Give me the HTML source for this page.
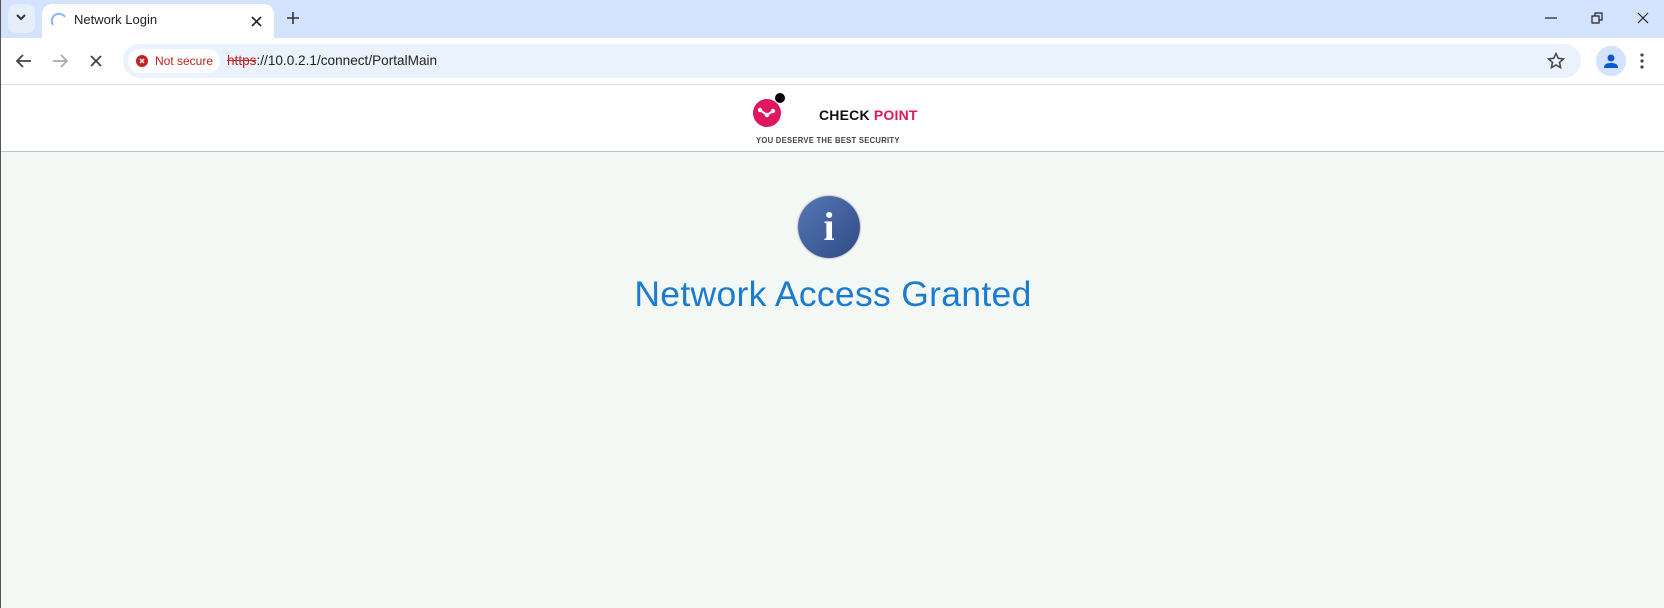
<!DOCTYPE html>
<html><head><meta charset="utf-8"><style>
*{margin:0;padding:0;box-sizing:border-box}
body{width:1664px;height:608px;overflow:hidden;font-family:"Liberation Sans",sans-serif;background:#f4f8f5;position:relative;border-left:1px solid #555}
.tabbar{position:absolute;left:0;top:0;width:1664px;height:38px;background:#d3e3fd}
.tab{position:absolute;left:41px;top:4px;width:232px;height:34px;background:#fff;border-radius:10px 10px 0 0}
.toolbar{position:absolute;left:0;top:38px;width:1664px;height:47px;background:#fff;border-bottom:1px solid #dcdcdc}
.omni{position:absolute;left:122px;top:6px;width:1458px;height:34px;background:#e9f2fd;border-radius:17px}
.chip{position:absolute;left:5px;top:5px;width:92px;height:24px;background:#fff;border-radius:12px;color:#c5221f;font-size:12px;line-height:24px;padding-left:27px;white-space:nowrap}
.header{position:absolute;left:0;top:85px;width:1664px;height:67px;background:#fff;border-bottom:1px solid #c0c0c0}
.title{position:absolute;left:0;width:1664px;top:274px;text-align:center;color:#1a7bd0;font-size:35.5px;font-weight:300;letter-spacing:0.3px}
</style></head><body>
<div class="tabbar">
 <div style="position:absolute;left:7px;top:4px;width:27px;height:29px;background:#e6eefb;border-radius:8px"></div>
 <svg style="position:absolute;left:14px;top:14px" width="12" height="8"><path d="M2 1l4 4 4-4" stroke="#333" stroke-width="2" fill="none"/></svg>
 <div class="tab">
  <svg style="position:absolute;left:8px;top:8px" width="18" height="18"><path d="M3 13A7 7 0 0 1 15 5" stroke="#8ab4f8" stroke-width="2" fill="none"/></svg>
  <div style="position:absolute;left:32px;top:8px;font-size:13px;color:#222">Network Login</div>
  <svg style="position:absolute;left:209px;top:12px" width="11" height="11"><path d="M1 1l9 9M10 1l-9 9" stroke="#222" stroke-width="1.6"/></svg>
 </div>
 <svg style="position:absolute;left:285px;top:11px" width="14" height="14"><path d="M7 1v12M1 7h12" stroke="#333" stroke-width="1.6"/></svg>
 <svg style="position:absolute;left:1544px;top:17px" width="12" height="2"><path d="M0 1h12" stroke="#222" stroke-width="1.2"/></svg>
 <svg style="position:absolute;left:1590px;top:12px" width="12" height="12"><path d="M1 4h7v7H1zM4 4V1h7v7H8" stroke="#222" stroke-width="1.2" fill="none"/></svg>
 <svg style="position:absolute;left:1636px;top:12px" width="12" height="12"><path d="M1 1l10 10M11 1L1 11" stroke="#222" stroke-width="1.2"/></svg>
</div>
<div class="toolbar">
 <svg style="position:absolute;left:15px;top:16px" width="16" height="14"><path d="M15 7H2M7 1L1 7l6 6" stroke="#444" stroke-width="1.8" fill="none"/></svg>
 <svg style="position:absolute;left:51px;top:16px" width="16" height="14"><path d="M1 7h13M9 1l6 6-6 6" stroke="#aaa" stroke-width="1.8" fill="none"/></svg>
 <svg style="position:absolute;left:89px;top:17px" width="12" height="12"><path d="M1 1l10 10M11 1L1 11" stroke="#444" stroke-width="1.8"/></svg>
 <div class="omni">
  <div class="chip"><svg style="position:absolute;left:8px;top:6px" width="12" height="12"><circle cx="6" cy="6" r="6" fill="#c5221f"/><path d="M4 4l4 4M8 4l-4 4" stroke="#fff" stroke-width="1.5"/></svg>Not secure</div>
  <div style="position:absolute;left:104px;top:9px;font-size:13.6px;color:#222"><span style="color:#c5221f;text-decoration:line-through">https</span>://10.0.2.1/connect/PortalMain</div>
  <svg style="position:absolute;left:1424px;top:8px" width="18" height="18"><path d="M9 1.5l2.2 4.8 5.2.6-3.9 3.5 1.1 5.2L9 13l-4.6 2.6 1.1-5.2L1.6 6.9l5.2-.6z" stroke="#444" stroke-width="1.5" fill="none"/></svg>
 </div>
 <div style="position:absolute;left:1595px;top:8px;width:30px;height:30px;border-radius:50%;background:#d3e3fd"></div>
 <svg style="position:absolute;left:1601px;top:14px" width="18" height="18"><circle cx="9" cy="6" r="3.5" fill="#0b57d0"/><path d="M2 16c0-4 3-5 7-5s7 1 7 5z" fill="#0b57d0"/></svg>
 <svg style="position:absolute;left:1639px;top:15px" width="4" height="16"><circle cx="2" cy="2" r="1.6" fill="#444"/><circle cx="2" cy="8" r="1.6" fill="#444"/><circle cx="2" cy="14" r="1.6" fill="#444"/></svg>
</div>
<div class="header">
 <svg style="position:absolute;left:750px;top:7px" width="34" height="36"><circle cx="16" cy="21" r="14" fill="#e0165f"/><circle cx="29" cy="6" r="5" fill="#000"/><path d="M9 18l7 5 6-4" stroke="#fff" stroke-width="2" fill="none"/><circle cx="9" cy="18" r="2.2" fill="#fff"/><circle cx="16" cy="23" r="2.2" fill="#fff"/><circle cx="22" cy="19" r="2.2" fill="#fff"/></svg>
 <div style="position:absolute;left:818px;top:22px;font-size:14px;font-weight:bold;letter-spacing:0.2px;color:#111;white-space:nowrap">CHECK <span style="color:#e0165f">POINT</span></div>
 <div style="position:absolute;left:755px;top:50px;width:154px;font-size:8.5px;font-weight:bold;letter-spacing:0.3px;color:#444;white-space:nowrap;transform:scaleX(0.9);transform-origin:left">YOU DESERVE THE BEST SECURITY</div>
</div>
<div style="position:absolute;left:797px;top:196px;width:62px;height:62px;border-radius:50%;background:linear-gradient(135deg,#5577b5,#2f4b85);box-shadow:0 0 2px #888"></div>
<div style="position:absolute;left:797px;top:203px;width:62px;text-align:center;color:#fff;font-family:'Liberation Serif',serif;font-weight:bold;font-size:40px">i</div>
<div class="title">Network Access Granted</div>
</body></html>
